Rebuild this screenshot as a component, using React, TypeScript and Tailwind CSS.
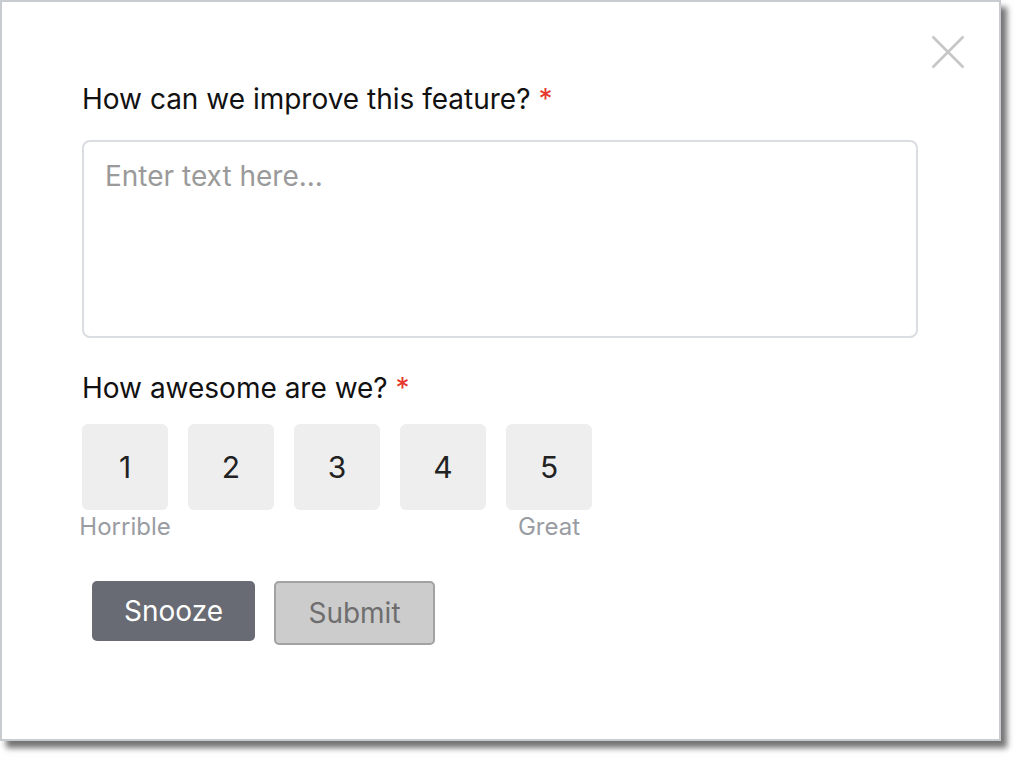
import React from "react";

export default function App() {
  const nums = [1, 2, 3, 4, 5];
  return (
    <div className="w-[1022px] h-[760px] bg-white" style={{ fontFamily: "Inter, 'Noto Sans', sans-serif" }}>
      <div className="relative w-[1001px] h-[741px] border-2 border-[#c8ccd1] bg-white shadow-[6px_7px_6px_rgba(0,0,0,0.55)]">
        <button className="absolute left-[929px] top-[33px] w-[34px] h-[34px]">
          <svg width="34" height="34" viewBox="0 0 34 34" fill="none">
            <path d="M1.5 1.5 L32.5 32.5 M32.5 1.5 L1.5 32.5" stroke="#c6c6c6" strokeWidth="2.6" />
          </svg>
        </button>
        <div className="flex flex-col pl-[80px] pt-[79px]">
          <div className="text-[28px] leading-[36px] text-[#111]">
            How can we improve this feature? <span className="text-[#e5372c]">*</span>
          </div>
          <div className="mt-[23px] w-[836px] h-[198px] rounded-[8px] border-2 border-[#dadde1] px-[21px] pt-[17px] text-[28px] leading-[34px] text-[#9a9a9a]">
            Enter text here...
          </div>
          <div className="mt-[32px] text-[28px] leading-[36px] text-[#111]">
            How awesome are we? <span className="text-[#e5372c]">*</span>
          </div>
          <div className="mt-[18px] flex gap-[20px]">
            {nums.map((n) => (
              <div key={n} className="flex flex-col items-center w-[86px]">
                <div className="w-[86px] h-[86px] rounded-[6px] bg-[#eeeeee] flex items-center justify-center text-[30px] text-[#222]">
                  {n}
                </div>
                <div className="h-[34px] text-[24px] leading-[34px] text-[#9a9ca3] whitespace-nowrap">
                  {n === 1 ? "Horrible" : n === 5 ? "Great" : ""}
                </div>
              </div>
            ))}
          </div>
          <div className="mt-[37px] ml-[10px] flex items-start gap-[19px]">
            <button className="w-[163px] h-[60px] rounded-[5px] bg-[#686b73] text-white text-[28px]">
              Snooze
            </button>
            <button className="w-[161px] h-[64px] rounded-[5px] bg-[#cccccc] border-2 border-[#a2a2a2] text-[#6e6e6e] text-[28px]">
              Submit
            </button>
          </div>
        </div>
      </div>
    </div>
  );
}
